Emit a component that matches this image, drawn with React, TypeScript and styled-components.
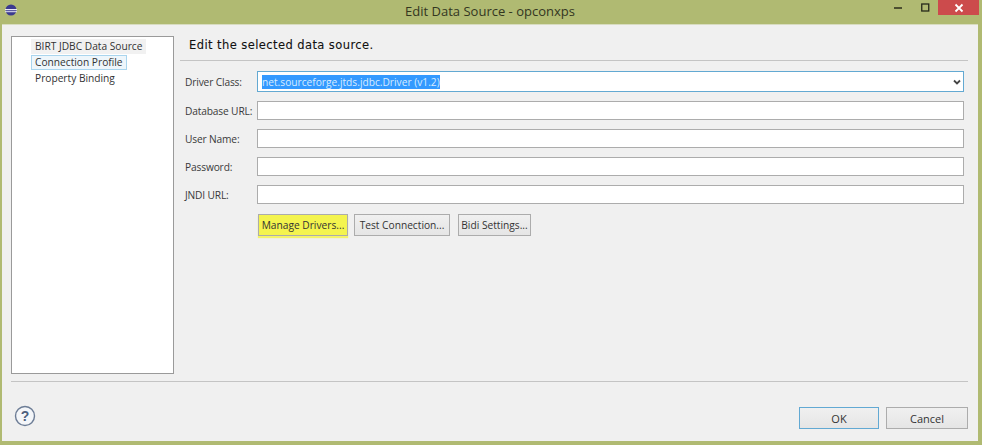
import { createGlobalStyle } from "styled-components"
import styled from "styled-components"

const GlobalStyle = createGlobalStyle`
    html, body {
        margin: 0;
        padding: 0;
        background: #b0ba72;
    }
    body {
        font-family: "Open Sans", "Noto Sans", sans-serif;
        font-size: 11px;
        color: #2c2c2c;
    }
`

const Window = styled.div`
    width: 982px;
    height: 445px;
    background: #b0ba72;
    display: flex;
    flex-direction: column;
    overflow: hidden;
`

const TitleBar = styled.div`
    height: 24px;
    flex: none;
    display: flex;
    align-items: flex-start;
    position: relative;
`

const TitleText = styled.div`
    position: absolute;
    left: 0;
    right: 2px;
    top: 2px;
    text-align: center;
    font-size: 13px;
    line-height: 18px;
    color: #33361f;
`

const AppIcon = styled.svg`
    width: 12px;
    height: 12px;
    margin: 4px 0 0 5px;
`

const Controls = styled.div`
    margin-left: auto;
    margin-right: 3px;
    display: flex;
    align-items: flex-start;
`

const ControlButton = styled.div<{ $w: number }>`
    width: ${p => p.$w}px;
    height: 15px;
    display: flex;
    align-items: center;
    justify-content: center;
`

const CloseButton = styled(ControlButton)`
    background: #cc4b4c;
`

const Client = styled.div`
    flex: 1;
    margin: 0 4px 4px 2px;
    background: #f0f0f0;
    padding: 11px 10px 0 9px;
    display: flex;
    flex-direction: column;
    border-top: 1px solid #d8dcc0;
`

const Main = styled.div`
    height: 338px;
    display: flex;
    flex: none;
`

const Tree = styled.div`
    width: 163px;
    box-sizing: border-box;
    flex: none;
    background: #fff;
    border: 1px solid #9a9a9a;
    padding: 2px 0 0 19px;
`

const TreeItem = styled.div<{ $state?: "hover" | "selected" }>`
    width: fit-content;
    height: 15px;
    box-sizing: border-box;
    line-height: 13px;
    padding: 0 3px;
    margin-bottom: 1px;
    font-size: 10.2px;
    color: #333;
    border: 1px solid ${p => (p.$state === "selected" ? "#a9d5ee" : "transparent")};
    background: ${p => (p.$state === "hover" ? "#f1f1f1" : p.$state === "selected" ? "#eef6fb" : "transparent")};
`

const Page = styled.div`
    flex: 1;
    padding-left: 6px;
    min-width: 0;
`

const PageHeader = styled.div`
    height: 25px;
    padding: 1px 0 0 9px;
    box-sizing: border-box;
    border-bottom: 1px solid #c4c4c4;
    font-family: "DejaVu Sans", sans-serif;
    font-size: 11.5px;
    font-weight: 400;
    letter-spacing: 0.42px;
    line-height: 17px;
    color: #111;
    -webkit-text-stroke: 0.1px #111;
`

const Form = styled.div`
    display: grid;
    grid-template-columns: 72px 707px;
    row-gap: 9px;
    padding: 10px 0 0 5px;
    align-items: center;
`

const FieldLabel = styled.label`
    font-size: 10.2px;
    color: #3a3a3a;
    white-space: nowrap;
    letter-spacing: -0.15px;
`

const TextField = styled.div`
    height: 19px;
    background: #fff;
    border: 1px solid #acacac;
    box-sizing: border-box;
`

const ComboField = styled.div`
    height: 21px;
    box-sizing: border-box;
    background: #fff;
    border: 1px solid #63a9d2;
    display: flex;
    align-items: center;
    padding: 0 1px 0 4px;
`

const SelectedText = styled.span`
    background: #3399ff;
    color: #d8ecff;
    font-size: 10.2px;
    line-height: 14px;
`

const Chevron = styled.svg`
    width: 10px;
    height: 8px;
    margin-left: auto;
`

const ButtonRow = styled.div`
    display: flex;
    padding: 10px 0 0 78px;
`

const PushButton = styled.div<{ $w: number; $gap?: number; $highlight?: boolean; $default?: boolean }>`
    width: ${p => p.$w}px;
    margin-right: ${p => p.$gap ?? 0}px;
    height: 22px;
    box-sizing: border-box;
    border: 1px solid ${p => (p.$default ? "#62a9d3" : "#acacac")};
    background: ${p => (p.$highlight ? "#f4f44e" : "linear-gradient(#f0f0f0, #e5e5e5)")};
    box-shadow: ${p => (p.$highlight ? "0 2px 1px #f4f46a" : "none")};
    display: flex;
    align-items: center;
    justify-content: center;
    font-size: 10.2px;
    color: #333;
    white-space: nowrap;
`

const Divider = styled.div`
    height: 1px;
    background: #c4c4c4;
    margin-top: 7px;
`

const Footer = styled.div`
    flex: 1;
    display: flex;
    align-items: flex-start;
    padding: 25px 0 0 0;
`

const HelpIcon = styled.svg`
    width: 22px;
    height: 22px;
    margin: -2px 0 0 3px;
`

const FooterButtons = styled.div`
    margin-left: auto;
    display: flex;
`

const FooterButton = styled(PushButton)`
    font-size: 11px;
`

export default function App() {
    return (
        <Window>
            <GlobalStyle />
            <TitleBar>
                <AppIcon viewBox="0 0 12 12">
                    <circle cx="6" cy="6" r="5.5" fill="#3b3a8f" />
                    <rect x="0" y="5" width="12" height="1.2" fill="#e6e6f2" />
                    <rect x="0" y="7.2" width="12" height="1" fill="#e6e6f2" />
                </AppIcon>
                <TitleText>Edit Data Source - opconxps</TitleText>
                <Controls>
                    <ControlButton $w={27}>
                        <svg width="9" height="3" viewBox="0 0 9 3"><rect width="8" height="2" y="1" fill="#4c5030" /></svg>
                    </ControlButton>
                    <ControlButton $w={26}>
                        <svg width="9" height="9" viewBox="0 0 9 9"><rect x="0.75" y="1" width="7" height="7" fill="none" stroke="#26281a" strokeWidth="1.3" /></svg>
                    </ControlButton>
                    <CloseButton $w={41}>
                        <svg width="10" height="10" viewBox="0 0 10 10"><path d="M1.5 1.5 L8.5 8.5 M8.5 1.5 L1.5 8.5" stroke="#fff" strokeWidth="1.8" /></svg>
                    </CloseButton>
                </Controls>
            </TitleBar>
            <Client>
                <Main>
                    <Tree>
                        <TreeItem $state="hover">BIRT JDBC Data Source</TreeItem>
                        <TreeItem $state="selected">Connection Profile</TreeItem>
                        <TreeItem>Property Binding</TreeItem>
                    </Tree>
                    <Page>
                        <PageHeader>Edit the selected data source.</PageHeader>
                        <Form>
                            <FieldLabel>Driver Class:</FieldLabel>
                            <ComboField>
                                <SelectedText>net.sourceforge.jtds.jdbc.Driver (v1.2)</SelectedText>
                                <Chevron viewBox="0 0 10 8">
                                    <path d="M2 2.5 L5 5.5 L8 2.5" fill="none" stroke="#444" strokeWidth="1.8" />
                                </Chevron>
                            </ComboField>
                            <FieldLabel>Database URL:</FieldLabel>
                            <TextField />
                            <FieldLabel>User Name:</FieldLabel>
                            <TextField />
                            <FieldLabel>Password:</FieldLabel>
                            <TextField />
                            <FieldLabel>JNDI URL:</FieldLabel>
                            <TextField />
                        </Form>
                        <ButtonRow>
                            <PushButton $w={90} $gap={6} $highlight>Manage Drivers...</PushButton>
                            <PushButton $w={96} $gap={8}>Test Connection...</PushButton>
                            <PushButton $w={73}>Bidi Settings...</PushButton>
                        </ButtonRow>
                    </Page>
                </Main>
                <Divider />
                <Footer>
                    <HelpIcon viewBox="0 0 22 22">
                        <circle cx="11" cy="11" r="9.5" fill="#f4f6f9" stroke="#6d7d96" strokeWidth="1.4" />
                        <text x="11" y="16" textAnchor="middle" fontSize="14" fontWeight="700" fontFamily="Liberation Sans, sans-serif" fill="#4d5f7e">?</text>
                    </HelpIcon>
                    <FooterButtons>
                        <FooterButton $w={80} $gap={7} $default>OK</FooterButton>
                        <FooterButton $w={82}>Cancel</FooterButton>
                    </FooterButtons>
                </Footer>
            </Client>
        </Window>
    )
}
